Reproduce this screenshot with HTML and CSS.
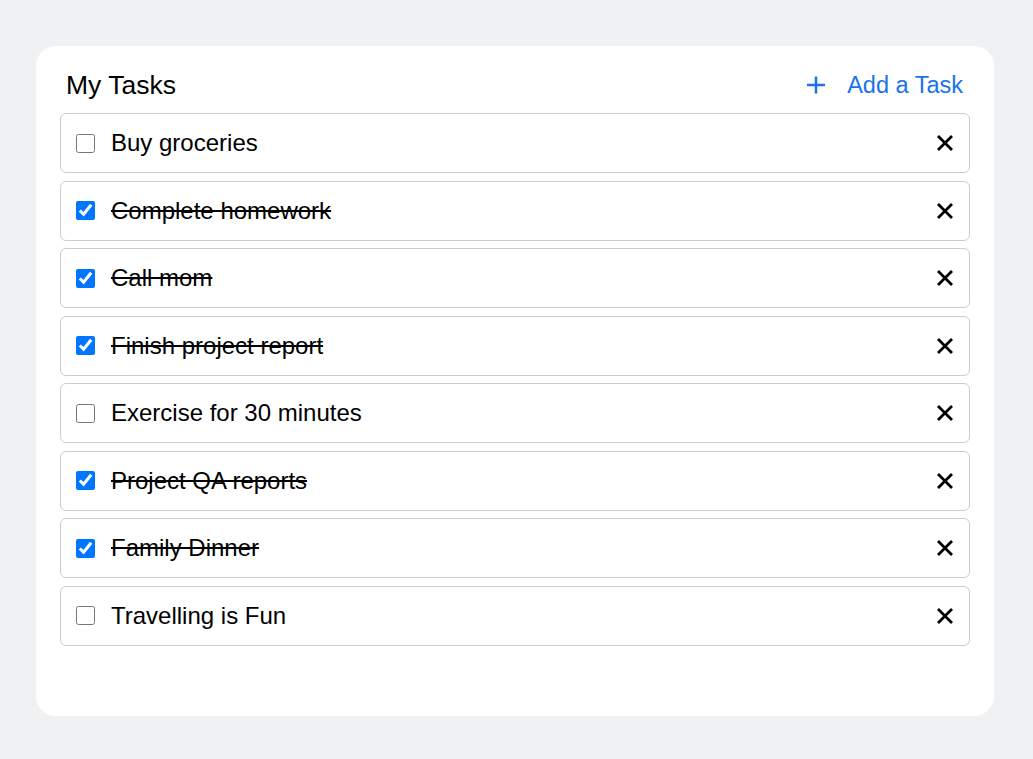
FILE: index.html
```html
<!DOCTYPE html>
<html>
<head>
<meta charset="utf-8">
<link rel="stylesheet" href="styles.css">
</head>
<body>
<div class="card">
  <div class="header">
    <h1 class="title">My Tasks</h1>
    <button class="add">
      <svg class="plus" width="20" height="20" viewBox="0 0 20 20"><path d="M10 1.5v17M1 10h18" stroke="currentColor" stroke-width="2.5" fill="none"/></svg>
      <span>Add a Task</span>
    </button>
  </div>
  <ul class="list">
    <li class="row"><input type="checkbox" class="check"><span class="label">Buy groceries</span><button class="del"><svg width="18" height="18" viewBox="0 0 18 18"><path d="M2 2l14 14M16 2L2 16" stroke="currentColor" stroke-width="2.8"/></svg></button></li>
    <li class="row done"><input type="checkbox" class="check" checked><span class="label">Complete homework</span><button class="del"><svg width="18" height="18" viewBox="0 0 18 18"><path d="M2 2l14 14M16 2L2 16" stroke="currentColor" stroke-width="2.8"/></svg></button></li>
    <li class="row done"><input type="checkbox" class="check" checked><span class="label">Call mom</span><button class="del"><svg width="18" height="18" viewBox="0 0 18 18"><path d="M2 2l14 14M16 2L2 16" stroke="currentColor" stroke-width="2.8"/></svg></button></li>
    <li class="row done"><input type="checkbox" class="check" checked><span class="label">Finish project report</span><button class="del"><svg width="18" height="18" viewBox="0 0 18 18"><path d="M2 2l14 14M16 2L2 16" stroke="currentColor" stroke-width="2.8"/></svg></button></li>
    <li class="row"><input type="checkbox" class="check"><span class="label">Exercise for 30 minutes</span><button class="del"><svg width="18" height="18" viewBox="0 0 18 18"><path d="M2 2l14 14M16 2L2 16" stroke="currentColor" stroke-width="2.8"/></svg></button></li>
    <li class="row done"><input type="checkbox" class="check" checked><span class="label">Project QA reports</span><button class="del"><svg width="18" height="18" viewBox="0 0 18 18"><path d="M2 2l14 14M16 2L2 16" stroke="currentColor" stroke-width="2.8"/></svg></button></li>
    <li class="row done"><input type="checkbox" class="check" checked><span class="label">Family Dinner</span><button class="del"><svg width="18" height="18" viewBox="0 0 18 18"><path d="M2 2l14 14M16 2L2 16" stroke="currentColor" stroke-width="2.8"/></svg></button></li>
    <li class="row"><input type="checkbox" class="check"><span class="label">Travelling is Fun</span><button class="del"><svg width="18" height="18" viewBox="0 0 18 18"><path d="M2 2l14 14M16 2L2 16" stroke="currentColor" stroke-width="2.8"/></svg></button></li>
  </ul>
</div>
</body>
</html>
```
FILE: styles.css
```css
* { box-sizing: border-box; }
html, body { margin: 0; padding: 0; }
body {
  background: #f0f1f3;
  font-family: "Liberation Sans", Arial, sans-serif;
  color: #000;
  padding: 46px 39px 43px 36px;
}
.card {
  background: #fff;
  border-radius: 20px;
  padding: 18px 24px 70.5px 24px;
  width: 958px;
}
.header {
  display: flex;
  align-items: center;
  justify-content: space-between;
  height: 42px;
  margin-bottom: 7px;
  padding-left: 6px;
}
.title {
  margin: 0;
  font-size: 26.5px;
  font-weight: 400;
}
.add {
  display: flex;
  align-items: center;
  gap: 21px;
  background: none;
  border: none;
  padding: 0 7px 0 0;
  color: #1a73e8;
  font-family: inherit;
  font-size: 23.5px;
  cursor: pointer;
}
.plus { display: block; }
.list {
  list-style: none;
  margin: 0;
  padding: 0;
  display: flex;
  flex-direction: column;
  gap: 7.5px;
}
.row {
  display: flex;
  align-items: center;
  height: 60px;
  border: 1px solid #cccccc;
  border-radius: 6px;
  padding: 0 15px 0 15px;
}
.check {
  width: 19px;
  height: 19px;
  margin: 0 16px 0 0;
  flex: none;
}
.label {
  flex: 1;
  font-size: 24px;
}
.done .label { text-decoration: line-through; }
.del {
  background: none;
  border: none;
  padding: 0;
  color: #000;
  display: flex;
  cursor: pointer;
}
```
